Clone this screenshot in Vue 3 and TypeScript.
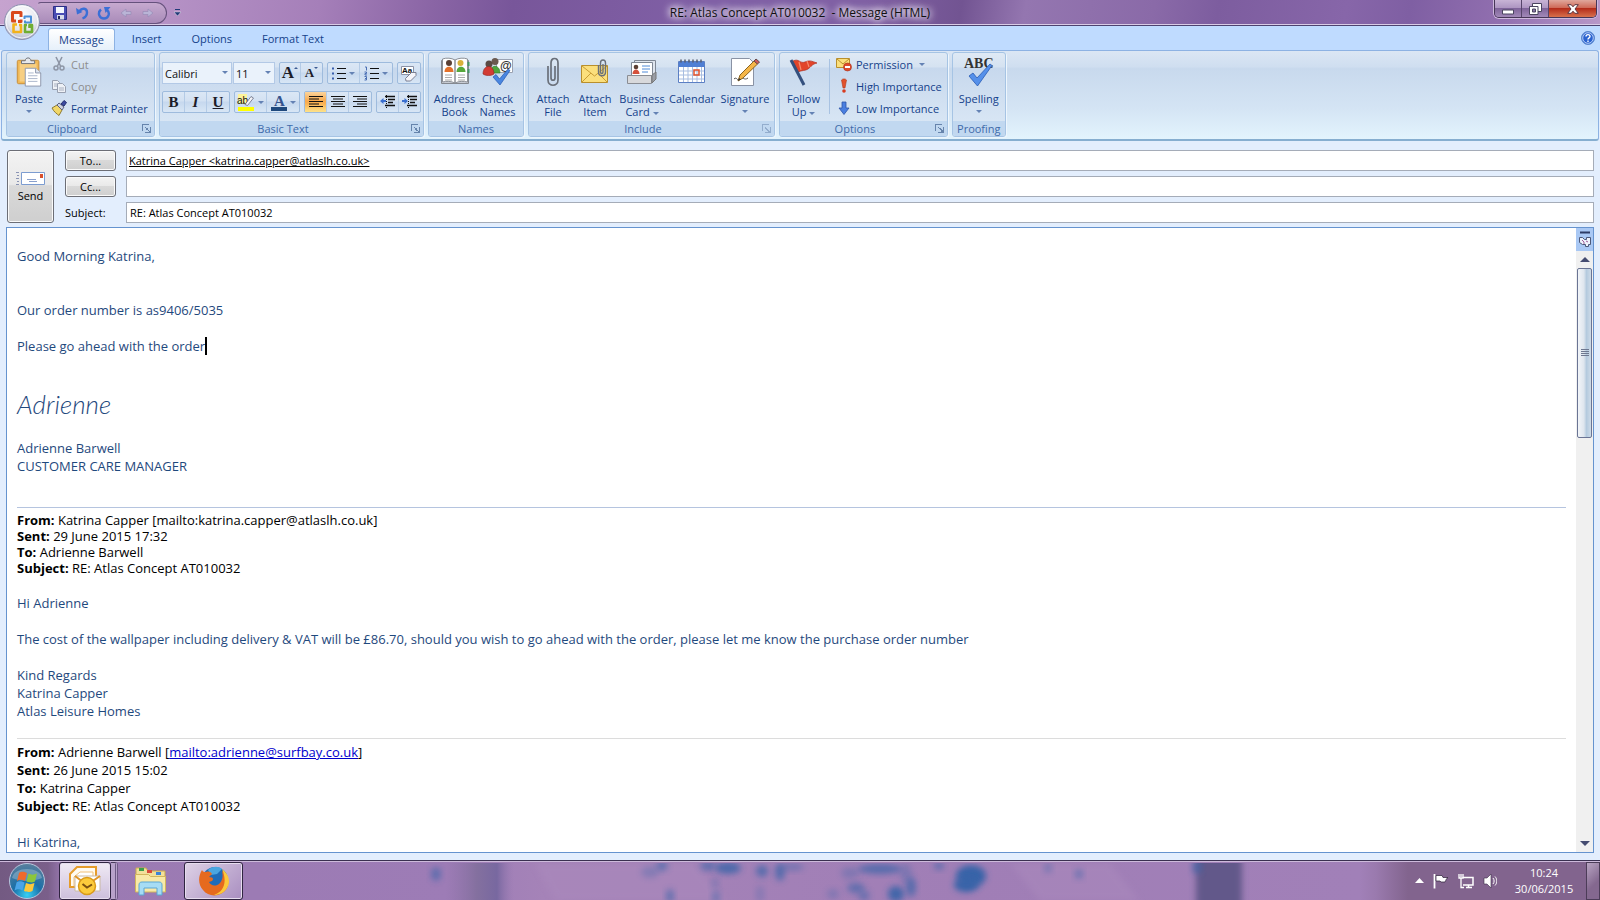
<script setup lang="ts">
import { ref } from 'vue'

const tabs = ['Message', 'Insert', 'Options', 'Format Text']
const activeTab = ref('Message')
const fontName = ref('Calibri')
const fontSize = ref('11')
const cc = ref('')
const subject = ref('RE: Atlas Concept AT010032')
const thumbShare = 30

interface Spot { x: number; y: number; rx: number; ry: number; o: number }
const spots: Spot[] = [
  { x: 436, y: 11, rx: 5, ry: 7, o: 0.6 },
  { x: 662, y: 3, rx: 6, ry: 5, o: 0.6 },
  { x: 650, y: 9, rx: 9, ry: 6, o: 0.3 },
  { x: 708, y: 3, rx: 8, ry: 5, o: 0.6 },
  { x: 728, y: 5, rx: 13, ry: 6, o: 0.8 },
  { x: 762, y: 8, rx: 6, ry: 6, o: 0.7 },
  { x: 780, y: 9, rx: 5, ry: 9, o: 0.7 },
  { x: 792, y: 4, rx: 12, ry: 4, o: 0.4 },
  { x: 670, y: 33, rx: 4, ry: 7, o: 0.6 },
  { x: 715, y: 20, rx: 4, ry: 5, o: 0.3 },
  { x: 716, y: 34, rx: 4, ry: 7, o: 0.45 },
  { x: 760, y: 31, rx: 4, ry: 9, o: 0.25 },
  { x: 880, y: 6, rx: 22, ry: 5, o: 0.7 },
  { x: 850, y: 10, rx: 9, ry: 6, o: 0.3 },
  { x: 906, y: 10, rx: 6, ry: 10, o: 0.3 },
  { x: 856, y: 25, rx: 9, ry: 5, o: 0.6 },
  { x: 864, y: 33, rx: 6, ry: 5, o: 0.5 },
  { x: 896, y: 31, rx: 8, ry: 8, o: 0.9 },
  { x: 911, y: 24, rx: 5, ry: 10, o: 0.7 },
  { x: 833, y: 31, rx: 6, ry: 5, o: 0.3 },
  { x: 971, y: 13, rx: 15, ry: 11, o: 1 },
  { x: 966, y: 22, rx: 12, ry: 7, o: 1 },
  { x: 939, y: 3, rx: 5, ry: 4, o: 0.6 },
  { x: 1048, y: 5, rx: 4, ry: 5, o: 0.4 },
  { x: 1079, y: 11, rx: 4, ry: 5, o: 0.5 },
  { x: 1197, y: 4, rx: 5, ry: 7, o: 0.6 }
]
</script>

<template>
  <div class="screen">
    <header class="titlebar">
      <div class="quick">
        <button class="q" aria-label="Save">
          <svg width="14" height="14" viewBox="0 0 14 14"><path d="M.5.5h13v13H2L.5 12z" fill="#4a4db4" stroke="#2c2f86" /><path d="M3 1h8v6H3z" fill="#f4f8ff" /><path d="M4 9h7v4.500H4z" fill="#d8dcea" /><path d="M5 10h2v3H5z" fill="#23245e" /></svg>
        </button>
        <button class="q" aria-label="Undo">
          <svg width="14" height="14" viewBox="0 0 14 14"><path d="M4.500 5C7 1.500 12 2 12 6.500c0 3-2 5-4.500 6" fill="none" stroke="#3b6fd6" stroke-width="2.400" /><path d="M1 2l1 6.500L7.500 6z" fill="#3b6fd6" /></svg>
        </button>
        <button class="q" aria-label="Redo">
          <svg width="14" height="14" viewBox="0 0 14 14"><path d="M4 3.500C0 7 2.500 12.500 7 12.500S13.500 7 10 4" fill="none" stroke="#3b6fd6" stroke-width="2.400" /><path d="M7 1h6.500L8.500 7z" fill="#3b6fd6" /></svg>
        </button>
        <button class="q" aria-label="Previous item">
          <svg width="12" height="10" viewBox="0 0 12 10"><path d="M6 1v2.500h5v3H6V9L1 5z" fill="#b9b4d6" stroke="#9488b4" stroke-width=".6" /></svg>
        </button>
        <button class="q" aria-label="Next item">
          <svg width="12" height="10" viewBox="0 0 12 10"><path d="M6 1v2.500H1v3h5V9l5-4z" fill="#b9b4d6" stroke="#9488b4" stroke-width=".6" /></svg>
        </button>
      </div>
      <button class="q more" aria-label="Customize Quick Access Toolbar">
        <svg width="7" height="8" viewBox="0 0 7 8"><path d="M1 .500h5" stroke="#223a78" /><path d="M0 3h7L3.500 7z" fill="#223a78" stroke="#fff" stroke-width=".4" /></svg>
      </button>
      <h1>RE: Atlas Concept AT010032&nbsp; - Message (HTML)</h1>
      <div class="winbtns">
        <button class="min" aria-label="Minimize"><svg width="12" height="6" viewBox="0 0 12 6"><path d="M.5 1h11v4H.5z" fill="#fff" stroke="#4b4560" /></svg></button>
        <button class="max" aria-label="Restore"><svg width="13" height="12" viewBox="0 0 13 12"><path d="M3.500.5h9v8h-9z" fill="#fff" stroke="#4b4560" /><path d="M.5 3.500h8.500v8H.5z" fill="#fff" stroke="#4b4560" /><path d="M3.500 6h3v3h-3z" fill="#8a78a8" stroke="#4b4560" /></svg></button>
        <button class="close" aria-label="Close"><svg width="12" height="10" viewBox="0 0 12 10"><path d="M.7.7h3.500L6 2.800 7.800.7h3.500L8 5l3.300 4.300H7.800L6 7.200 4.200 9.300H.7L4 5z" fill="#fff" stroke="#5b3540" /></svg></button>
      </div>
    </header>

    <button class="orb" aria-label="Office Button">
      <svg width="38" height="38" viewBox="0 0 38 38">
        <defs><radialGradient id="ob" cx=".5" cy=".3" r=".75"><stop offset="0" stop-color="#fff" /><stop offset=".6" stop-color="#e4e6ee" /><stop offset="1" stop-color="#a9adc4" /></radialGradient></defs>
        <circle cx="19" cy="19" r="17.500" fill="url(#ob)" stroke="#8c8fae" />
        <circle cx="19" cy="19" r="16" fill="none" stroke="#fff" stroke-opacity=".8" />
        <g fill="none">
          <path d="M13 18H9.500V9.500H18V14M18 16.500v2h-3" stroke="#d9481c" stroke-width="3" stroke-linejoin="round" />
          <path d="M21.500 16v-2.500h6.500v6h-6v-2" stroke="#4a8fd8" stroke-width="2" stroke-linejoin="round" />
          <path d="M14 21.500h-3.500v7.500H18v-7h-2" stroke="#f2b21c" stroke-width="2.600" stroke-linejoin="round" />
          <path d="M24 22h-2v7h7v-7h-2.500v3" stroke="#6fae33" stroke-width="2.600" stroke-linejoin="round" />
        </g>
      </svg>
    </button>

    <nav class="tabs">
      <button v-for="t in tabs" :key="t" class="tab" :class="{ on: t === activeTab }" @click="activeTab = t">{{ t }}</button>
      <button class="help" aria-label="Help"><svg width="14" height="14" viewBox="0 0 14 14"><circle cx="7" cy="7" r="6.500" fill="#2a62d0" stroke="#5c88cc" /><circle cx="7" cy="7" r="5.300" fill="none" stroke="#dceaff" stroke-width=".8" /><path d="M5 5.500c0-2.500 4-2.500 4 0C9 7 7 6.800 7 8.500M7 9.500v1.500" fill="none" stroke="#fff" stroke-width="1.400" /></svg></button>
    </nav>

    <section class="ribbon">
      <div class="group">
        <div class="body clip">
          <button class="big paste">
            <svg width="28" height="32" viewBox="0 0 28 32"><rect x="1.500" y="3.500" width="23" height="25" rx="1.500" fill="#f0b856" stroke="#c98c34" /><path d="M4 7h18v19H4z" fill="#f7cf83" /><path d="M6 7V4h4c0-4 6-4 6 0h4v3z" fill="#e6e8ec" stroke="#6c6f78" /><path d="M10 12h11l5.500 5v14H10z" fill="#fff" stroke="#8c95ac" /><path d="M21 12v5h5.500" fill="#dfe6f2" stroke="#8c95ac" /><path d="M13 17h6M13 20h10M13 23h10M13 26h10" stroke="#a9b4ca" /></svg>
            <span>Paste</span><i class="arr"></i>
          </button>
          <div class="smalls">
            <button class="small off"><svg width="16" height="16" viewBox="0 0 16 16"><path d="M5 1l4.500 9M11 1L6.500 10" stroke="#8e96a6" stroke-width="1.600" /><circle cx="5" cy="12" r="2" fill="none" stroke="#8e96a6" stroke-width="1.500" /><circle cx="11" cy="12" r="2" fill="none" stroke="#8e96a6" stroke-width="1.500" /></svg>Cut</button>
            <button class="small off"><svg width="16" height="16" viewBox="0 0 16 16"><path d="M1.500 2.500h5l2 2v7h-7z" fill="#eef1f6" stroke="#98a0b0" /><path d="M6.500 5.500h5l3 3v6h-8z" fill="#eef1f6" stroke="#98a0b0" /><path d="M3 6h3M3 8h3M8 10h5M8 12h5" stroke="#a8b0c0" /></svg>Copy</button>
            <button class="small"><svg width="16" height="16" viewBox="0 0 16 16"><path d="M1 8l5-3 5 5-3 5.500C6 14 3 12 1 8z" fill="#f1d768" stroke="#8d7a34" /><path d="M6 5l2-2 5 4-2 3z" fill="#cfd3e0" stroke="#5c6180" /><path d="M10 4l3-3.500 2.500 2L13 6z" fill="#3c4aa0" stroke="#252f70" /></svg>Format Painter</button>
          </div>
        </div>
        <div class="cap more-opts">Clipboard<i class="launch"></i></div>
      </div>

      <div class="group">
        <div class="body basic">
          <div class="row">
            <div class="combos">
              <span class="combo name"><select v-model="fontName" aria-label="Font"><option>Calibri</option><option>Tahoma</option></select><i class="arr"></i></span>
              <span class="combo size"><select v-model="fontSize" aria-label="Font size"><option>11</option><option>12</option></select><i class="arr"></i></span>
            </div>
            <div class="set">
              <button class="t w21" aria-label="Grow Font"><b class="ser g">A</b><i class="tri up"></i></button>
              <button class="t w21" aria-label="Shrink Font"><b class="ser s">A</b><i class="tri"></i></button>
            </div>
            <div class="set">
              <button class="t w32" aria-label="Bullets"><svg width="14" height="14" viewBox="0 0 14 14"><path d="M5 2.500h9M5 7.500h9M5 12.500h9" stroke="#111" /><path d="M0 1.500h2v2H0zM0 6.500h2v2H0zM0 11.500h2v2H0z" fill="#3a5fae" /></svg><i class="arr"></i></button>
              <button class="t w32" aria-label="Numbering"><svg width="15" height="15" viewBox="0 0 15 15"><path d="M6 2.500h9M6 7.500h9M6 12.500h9" stroke="#111" /><path d="M1 1h1.500v3.500M.5 6h2v1.500H1V9h2M.5 10.500h2v3.500h-2M1 12.500h1.500" fill="none" stroke="#4a6fb4" /></svg><i class="arr"></i></button>
            </div>
            <div class="set">
              <button class="t w22" aria-label="Clear Formatting"><svg width="18" height="18" viewBox="0 0 18 18"><path d="M1.500 2.500h12v8h-12z" fill="#fff" stroke="#8c93a6" /><text x="2" y="9" font-size="8" font-weight="bold" font-family="Liberation Sans, sans-serif" fill="#111">Aa</text><path d="M5.500 14.500l6-6H16v3l-5.500 5.500H6z" fill="#f5f5fa" stroke="#7a7f92" /></svg></button>
            </div>
          </div>
          <div class="row">
            <div class="set">
              <button class="t w22"><b class="ser">B</b></button>
              <button class="t w22"><b class="ser it">I</b></button>
              <button class="t w22"><b class="ser un">U</b></button>
            </div>
            <div class="set">
              <button class="t w32" aria-label="Highlight"><svg width="18" height="18" viewBox="0 0 18 18"><path d="M1 1h9v10H1z" fill="#fdf39a" /><text x="0" y="11" font-size="10" font-family="Liberation Sans, sans-serif" fill="#111">ab</text><path d="M8 11.500l6-8 2.500 1.500-6 7.500z" fill="#f4f4f8" stroke="#666c80" stroke-width=".8" /><path d="M1 14h16v4H1z" fill="#ff0" /></svg><i class="arr"></i></button>
              <button class="t w32" aria-label="Font Color"><svg width="16" height="18" viewBox="0 0 16 18"><text x="3" y="13" font-size="15" font-weight="bold" font-family="Liberation Serif, serif" fill="#35548e">A</text><path d="M0 14h16v4H0z" fill="#1f497d" /></svg><i class="arr"></i></button>
            </div>
            <div class="set">
              <button class="t w22 hot" aria-label="Align Left"><svg width="14" height="12" viewBox="0 0 14 12"><path d="M0 .5h14M0 3h10M0 5.500h14M0 8h10M0 10.500h14" stroke="#111" /></svg></button>
              <button class="t w22" aria-label="Center"><svg width="14" height="12" viewBox="0 0 14 12"><path d="M0 .5h14M2 3h10M0 5.500h14M2 8h10M0 10.500h14" stroke="#111" /></svg></button>
              <button class="t w22" aria-label="Align Right"><svg width="14" height="12" viewBox="0 0 14 12"><path d="M0 .5h14M4 3h10M0 5.500h14M4 8h10M0 10.500h14" stroke="#111" /></svg></button>
            </div>
            <div class="set">
              <button class="t w22" aria-label="Decrease Indent"><svg width="16" height="14" viewBox="0 0 16 14"><path d="M5 1.500h10M8 4.500h7M8 7.500h5M5 10.500h10" stroke="#111" stroke-width="1.500" /><path d="M6.500 0v14" stroke="#111" stroke-dasharray="1 1" /><path d="M0 6l3.500-3v2H6v2H3.500v2z" fill="#3a6fd0" /></svg></button>
              <button class="t w21" aria-label="Increase Indent"><svg width="16" height="14" viewBox="0 0 16 14"><path d="M5 1.500h10M8 4.500h7M8 7.500h5M5 10.500h10" stroke="#111" stroke-width="1.500" /><path d="M6.500 0v14" stroke="#111" stroke-dasharray="1 1" /><path d="M6 6L2.500 3v2H0v2h2.500v2z" fill="#3a6fd0" /></svg></button>
            </div>
          </div>
        </div>
        <div class="cap more-opts">Basic Text<i class="launch"></i></div>
      </div>

      <div class="group">
        <div class="body names">
          <button class="big w43">
            <svg width="30" height="30" viewBox="0 0 30 30"><path d="M1.500 3.500h27v23h-27z" fill="#c8ccd4" stroke="#84888f" /><path d="M2.500 2c4-1.500 9-1 12.500 1v23c-4-2-8.500-2-12.500-1zM27.500 2c-4-1.500-9-1-12.500 1v23c4-2 8.500-2 12.500-1z" fill="#fff" stroke="#8c9097" /><path d="M5 18h7M5 20.500h7M5 23h7M18 18h7M18 20.500h7M18 23h7" stroke="#aaa" /><circle cx="9" cy="6" r="3" fill="#5b4035" /><path d="M4.500 15c0-7 9-7 9 0z" fill="#e4712a" /><circle cx="20.500" cy="6" r="3" fill="#d9b13a" /><path d="M16.500 15c0-7 9-7 9 0z" fill="#57a83c" /><path d="M28.500 5v4M28.500 12v4" stroke="#496" stroke-width="2" /></svg>
            <span>Address</span><span>Book</span>
          </button>
          <button class="big w43">
            <svg width="32" height="30" viewBox="0 0 32 30"><path d="M14.500 2.500h16v13h-16z" fill="#fff" stroke="#9aa2b2" /><text x="18" y="13" font-size="12" font-weight="bold" font-family="Liberation Sans, sans-serif" fill="#333">@</text><circle cx="13" cy="4.500" r="3.500" fill="#6b5a50" /><path d="M8 16c0-9 10-9 10 0z" fill="#4ea63e" stroke="#2f7a28" stroke-width=".6" /><circle cx="7" cy="7" r="3.500" fill="#5b4a44" /><path d="M1 17c0-10 11-10 11 0-3 2-8 2-11 0z" fill="#d23b34" stroke="#8e2522" stroke-width=".6" /><path d="M11 20l3-2.500 3.500 4.500L26 12l2 1.500L18 28z" fill="#4a86e0" stroke="#2559b0" stroke-width=".7" /></svg>
            <span>Check</span><span>Names</span>
          </button>
        </div>
        <div class="cap">Names</div>
      </div>

      <div class="group">
        <div class="body include">
          <button class="big w42">
            <svg width="14" height="30" viewBox="0 0 14 30"><path d="M9 9v12c0 3-4 3-4 0V6c0-6 7-6 7 0v17c0 7-10 7-10 0V9" fill="none" stroke="#6a707a" stroke-width="1.700" /></svg>
            <span>Attach</span><span>File</span>
          </button>
          <button class="big w42">
            <svg width="30" height="30" viewBox="0 0 30 30"><path d="M1.500 8.500h26v17h-26z" fill="#fbdf7c" stroke="#b98f2c" /><path d="M2 9l12.500 10L27 9M2 25l9-9M27 25l-9-9" fill="none" stroke="#c99c34" /><path d="M23 7v8c0 2-2.500 2-2.500 0V6c0-4 5-4 5 0v9c0 5-7 5-7 0V8" fill="none" stroke="#6a707a" stroke-width="1.400" /></svg>
            <span>Attach</span><span>Item</span>
          </button>
          <button class="big w52">
            <svg width="32" height="30" viewBox="0 0 32 30"><path d="M8.500 3.500h21v14h-21z" fill="#dfe5ee" stroke="#7e8794" /><path d="M5.500 5.500h21v14h-21z" fill="#fff" stroke="#7e8794" /><path d="M16 9h8M16 12h8M16 15h6" stroke="#4f8ad8" /><circle cx="10" cy="10" r="2.300" fill="#5b4035" /><path d="M6.500 17c0-6 7-6 7 0z" fill="#d4503a" /><path d="M1.500 18.500h24v8h-24z" fill="#d8d9dc" stroke="#8a8d94" /><path d="M26 18l4-3v7l-4 4z" fill="#9a9da5" stroke="#777" /></svg>
            <span>Business</span><span>Card <i class="arr"></i></span>
          </button>
          <button class="big w48">
            <svg width="30" height="30" viewBox="0 0 30 30"><path d="M1.500 4.500h26v21h-26z" fill="#fff" stroke="#5b7fc4" /><path d="M2 5h25v5H2z" fill="#4f7fd4" /><path d="M2 14h25M2 18h25M2 22h25M6.500 10v15M11 10v15M15.500 10v15M20 10v15M24.500 10v15" stroke="#a8bde0" /><path d="M4 2.500v3M8 2.500v3M12 2.500v3M16 2.500v3M20 2.500v3M24 2.500v3" stroke="#555c70" stroke-width="1.500" /><path d="M17 13h5v5h-5z" fill="none" stroke="#e2542c" stroke-width="1.500" /></svg>
            <span>Calendar</span>
          </button>
          <button class="big w58">
            <svg width="32" height="30" viewBox="0 0 32 30"><path d="M2.500 1.500h18l4 4v23h-22z" fill="#fff" stroke="#8992a4" /><path d="M5 22c3-3 3 3 6 0s4 2 8-1" fill="none" stroke="#555" /><path d="M9 24l2-6L25 4l3.500 3L14 21z" fill="#f5b648" stroke="#8a6420" /><path d="M25 4l2-2 3.500 3-2 2z" fill="#d05a5a" stroke="#6a4a4a" /><path d="M9 24l1-3 2 1.500z" fill="#333" /></svg>
            <span>Signature</span><i class="arr"></i>
          </button>
        </div>
        <div class="cap more-opts">Include<i class="launch dim"></i></div>
      </div>

      <div class="group">
        <div class="body opts">
          <button class="big w43">
            <svg width="30" height="30" viewBox="0 0 30 30"><path d="M4 4c6-3 7 3 12 1s6-1 12 1c-5 1-6 4-9 6s-6 1-10 3z" fill="#e2452a" stroke="#b02c1c" stroke-width=".7" /><path d="M10 5l2 8M18 4l2 6" stroke="#f58a6c" stroke-width="1.200" /><path d="M2 3l13 25" stroke="#34507e" stroke-width="3" /></svg>
            <span>Follow</span><span>Up <i class="arr"></i></span>
          </button>
          <div class="smalls split">
            <button class="small"><svg width="16" height="16" viewBox="0 0 16 16"><path d="M.5 2.500h13v9H.5z" fill="#fbdf7c" stroke="#b98f2c" /><path d="M1 3l6 5 6-5" fill="none" stroke="#b98f2c" /><circle cx="11.500" cy="11" r="4" fill="#de4b2c" stroke="#a8321c" stroke-width=".6" /><path d="M9 11h5" stroke="#fff" stroke-width="1.800" /></svg>Permission <i class="arr"></i></button>
            <button class="small"><svg width="16" height="16" viewBox="0 0 16 16"><path d="M5.500 2c1-1.500 4-1.500 5 0L9 10H7z" fill="#e2512c" stroke="#b03a1c" stroke-width=".6" /><circle cx="8" cy="13" r="1.800" fill="#d83c20" /></svg>High Importance</button>
            <button class="small"><svg width="16" height="16" viewBox="0 0 16 16"><path d="M6 2h4v6h3l-5 6.500L3 8h3z" fill="#4a7fe0" stroke="#2d55a8" stroke-width=".8" /></svg>Low Importance</button>
          </div>
        </div>
        <div class="cap more-opts">Options<i class="launch"></i></div>
      </div>

      <div class="group">
        <div class="body">
          <button class="big w52">
            <svg width="32" height="30" viewBox="0 0 32 30"><text x="1" y="11" font-size="14" font-weight="bold" font-family="Liberation Serif, serif" fill="#333">ABC</text><path d="M6 19l4-3 4 5L27 7l2 1.500L14.500 29z" fill="#5590ea" stroke="#2a5cb4" stroke-width=".8" /></svg>
            <span>Spelling</span><i class="arr"></i>
          </button>
        </div>
        <div class="cap">Proofing</div>
      </div>
    </section>

    <main class="compose">
      <form class="head" @submit.prevent>
        <button class="send">
          <svg width="30" height="16" viewBox="0 0 30 16"><path d="M5.500 1.500h23v12h-23z" fill="#fff" stroke="#7c9cd0" /><path d="M24 3h3v4h-3z" fill="#d8502c" /><path d="M11 8.500h9M13 10.500h8" stroke="#8aa0cc" /><path d="M0 1.500h3M1 4.500h2M0 7.500h3M1 10.500h2M0 13.500h3" stroke="#8a94b4" /></svg>
          Send
        </button>
        <button class="pick">To...</button>
        <div class="field to" tabindex="0"><a href="mailto:katrina.capper@atlaslh.co.uk">Katrina Capper &lt;katrina.capper@atlaslh.co.uk&gt;</a></div>
        <button class="pick">Cc...</button>
        <input v-model="cc" class="field" aria-label="Cc" />
        <label for="subject">Subject:</label>
        <input id="subject" v-model="subject" class="field" />
      </form>

      <div class="editor">
        <article class="doc" role="textbox" aria-label="Message body" aria-multiline="true" tabindex="0">
          <p>Good Morning Katrina,</p>
          <p class="gap2">Our order number is as9406/5035</p>
          <p class="gap1">Please go ahead with the order<span class="caret"></span></p>
          <p class="sign">Adrienne</p>
          <p>Adrienne Barwell</p>
          <p>CUSTOMER CARE MANAGER</p>
          <div class="quote tah">
            <p><b>From:</b> Katrina Capper [mailto:katrina.capper@atlaslh.co.uk]</p>
            <p><b>Sent:</b> 29 June 2015 17:32</p>
            <p><b>To:</b> Adrienne Barwell</p>
            <p><b>Subject:</b> RE: Atlas Concept AT010032</p>
          </div>
          <p class="gap1">Hi Adrienne</p>
          <p class="gap1">The cost of the wallpaper including delivery &amp; VAT will be £86.70, should you wish to go ahead with the order, please let me know the purchase order number</p>
          <p class="gap1">Kind Regards</p>
          <p>Katrina Capper</p>
          <p>Atlas Leisure Homes</p>
          <div class="quote cal">
            <p><b>From:</b> Adrienne Barwell [<a href="mailto:adrienne@surfbay.co.uk">mailto:adrienne@surfbay.co.uk</a>]</p>
            <p><b>Sent:</b> 26 June 2015 15:02</p>
            <p><b>To:</b> Katrina Capper</p>
            <p><b>Subject:</b> RE: Atlas Concept AT010032</p>
          </div>
          <p class="gap1">Hi Katrina,</p>
        </article>
        <div class="scroll">
          <button class="ruler" aria-label="Show ruler"><svg width="14" height="18" viewBox="0 0 14 18"><path d="M2 1.500h10" stroke="#2d3c66" stroke-width="2" /><path d="M1.500 6.500h3l2 2h2v-2h4v7h-2v2h-3v-2h-3l-3-2z" fill="#eef2fb" stroke="#4c5878" /><path d="M4 9l2 2M8 10l2 1M5 12h2" stroke="#a05a98" /></svg></button>
          <button class="step" aria-label="Scroll up"><svg width="10" height="5" viewBox="0 0 10 5"><path d="M0 5l5-5 5 5z" fill="#444b70" /></svg></button>
          <div class="track"><div class="thumb" :style="{ height: thumbShare + '%' }"><i></i></div></div>
          <button class="step" aria-label="Scroll down"><svg width="10" height="5" viewBox="0 0 10 5"><path d="M0 0l5 5 5-5z" fill="#444b70" /></svg></button>
        </div>
      </div>
    </main>

    <footer class="taskbar">
      <svg class="wall" width="1600" height="38" viewBox="0 0 1600 38" aria-hidden="true">
        <defs>
          <filter id="soft" x="-50%" y="-50%" width="200%" height="200%"><feGaussianBlur stdDeviation="3" /></filter>
          <linearGradient id="s1"><stop offset="0" stop-color="#8a70a6" stop-opacity="0" /><stop offset=".45" stop-color="#84709f" /><stop offset=".75" stop-color="#7868a0" /><stop offset="1" stop-color="#9478b0" stop-opacity="0" /></linearGradient>
        </defs>
        <path d="M446 0h68v38h-68z" fill="url(#s1)" />
        <path d="M535 0h160l30 38H555zM1010 0h100l30 38h-100z" fill="#ab8abd" opacity=".5" filter="url(#soft)" />
        <path d="M1196 -10h46v58h-46z" fill="#62588a" filter="url(#soft)" />
        <ellipse v-for="(s, i) in spots" :key="i" :cx="s.x" :cy="s.y" :rx="s.rx" :ry="s.ry" :opacity="s.o" fill="#3764a8" filter="url(#soft)" />
      </svg>
      <button class="start" aria-label="Start">
        <svg width="38" height="38" viewBox="0 0 38 38">
          <defs><radialGradient id="sg" cx=".5" cy=".9" r=".9"><stop offset="0" stop-color="#38d0f4" /><stop offset=".45" stop-color="#1a6fa8" /><stop offset="1" stop-color="#5a7f9c" /></radialGradient></defs>
          <circle cx="19" cy="19" r="17.500" fill="url(#sg)" stroke="#b8c4dc" />
          <path d="M4 16C6 4 32 4 34 16 25 20 13 20 4 16z" fill="#fff" opacity=".25" />
          <path d="M11 11c3-2 5-1 8 0l-2 8c-3-1.500-5-2-8 0z" fill="#ee6a2c" /><path d="M20.500 11.500c3 1.500 5 1.500 8.500 0l-2 8c-3 1.500-5 1-8.500 0z" fill="#8cc63c" /><path d="M8.500 20.500c3-2 5-1 8 0l-2 8c-3-1.500-5-2-8 0z" fill="#4aa4e8" /><path d="M18 21c3 1.500 5 1.500 8.500 0l-2 8c-3 1.500-5 1-8.500 0z" fill="#fcc83a" />
        </svg>
      </button>
      <button class="app active" aria-label="Outlook">
        <svg width="34" height="32" viewBox="0 0 34 32"><path d="M2 9L9 2h19v20H2z" fill="#fffaf0" stroke="#e59c2c" stroke-width="2" /><path d="M6 12l6-5h13v14H6z" fill="#fff" stroke="#f0c078" /><path d="M7 11h25v15H7z" fill="#fff" stroke="#c9b9a4" /><path d="M7 11l12 9 13-9" fill="none" stroke="#e0962a" stroke-width="2" /><circle cx="19" cy="21" r="8.500" fill="#fccb3c" stroke="#d99a1a" stroke-width="1.500" /><path d="M14.500 19l4.500 3.500 5-3" fill="none" stroke="#7a5010" stroke-width="2" /></svg>
      </button>
      <i class="stack"></i>
      <button class="app plain" aria-label="Windows Explorer">
        <svg width="34" height="32" viewBox="0 0 34 32"><path d="M2 3h10l2 3h17v8H2z" fill="#f3e09a" stroke="#c8aa50" /><path d="M5 3h5v3H5z" fill="#3ca04a" /><path d="M13 5h5v3h-5z" fill="#d84a3a" /><path d="M22 7h5v3h-5z" fill="#3a84d8" /><path d="M1.500 9.500h13l2 2h15V27h-30z" fill="#f8e9a8" stroke="#d2b65c" /><path d="M5 30V20c0-2 1-3 3-3h17c2 0 3 1 3 3v10h-5v-7H10v7z" fill="#a6dcf4" stroke="#5aa6d4" /></svg>
      </button>
      <button class="app firefox" aria-label="Firefox">
        <svg width="32" height="32" viewBox="0 0 32 32"><circle cx="17" cy="15" r="13" fill="#1f6cb8" /><path d="M10 5c4-4 11-4 14-1l-5 5-6 1z" fill="#4aa6e0" /><path d="M4 5c1 2 2 2 4 2 3-1 5 0 6 2l-3 3c4 0 5 2 3 4l-3 1c2 4 7 5 11 1 3-4 3-8 2-12 6 4 8 11 5 17-5 9-18 10-24 2C0 20 0 11 4 5z" fill="#e66a1e" /><path d="M24 4c7 5 9 13 5 19-3 5-8 7-13 7 9-3 14-12 8-26z" fill="#fbc93c" /></svg>
      </button>
      <div class="tray">
        <button aria-label="Show hidden icons"><svg width="9" height="5" viewBox="0 0 9 5"><path d="M0 5l4.500-5L9 5z" fill="#fff" /></svg></button>
        <button aria-label="Action Center"><svg width="16" height="16" viewBox="0 0 16 16"><path d="M1.500 1v14.500" stroke="#fff" stroke-width="1.800" /><path d="M3 2.500h6l1 2h5c-2 1-2 3-3 4.500H8l-1-1H3z" fill="#fff" stroke="#2c2038" stroke-width=".7" /></svg></button>
        <button aria-label="Network"><svg width="16" height="16" viewBox="0 0 16 16"><path d="M5 4.500h10v7.500H5M8 14.500h6M10.500 12v2" fill="none" stroke="#fff" stroke-width="1.500" /><path d="M1 1v4h4V1M3 5v9.500h3M3 1v3" fill="none" stroke="#fff" stroke-width="1.300" /></svg></button>
        <button aria-label="Volume"><svg width="14" height="16" viewBox="0 0 14 16"><path d="M1 5h3l4-4v14l-4-4H1z" fill="#fff" stroke="#3a2c48" stroke-width=".6" /><path d="M10 5c1.500 2 1.500 4 0 6M12 3.500c2.500 3 2.500 6 0 9" fill="none" stroke="#fff" /></svg></button>
      </div>
      <time class="clock"><span>10:24</span><span>30/06/2015</span></time>
      <button class="desk" aria-label="Show desktop"></button>
    </footer>
  </div>
</template>

<style>
html, body { margin: 0; height: 100%; overflow: hidden; }
</style>

<style scoped>
* { box-sizing: border-box; }
button { font: inherit; color: inherit; border: 0; background: none; padding: 0; margin: 0; display: flex; align-items: center; justify-content: center; cursor: default; }
svg { display: block; flex: none; }
p, h1 { margin: 0; font-weight: normal; }
i { font-style: normal; }
.screen { position: relative; height: 100vh; display: flex; flex-direction: column; font-family: "Open Sans", "Noto Sans", sans-serif; font-size: 11px; color: #15428b; background: #e3eefd; }

.titlebar { flex: none; height: 26px; display: flex; align-items: center; padding-left: 37px; border-bottom: 1px solid #4d4370; box-shadow: inset 0 -1px 0 #d9cbe6; background: linear-gradient(100deg, #c6a3cf 0, #b996c8 8%, #a57fb9 20%, #8a65a5 27%, #78569a 32%, #8060a6 44%, #8060a4 54%, #725492 60%, #9476b0 64%, #8a6aa8 72%, #7d5d9f 76%, #8766a9 84%, #7f5fa3 88%, #9270b0 94%, #b898c8 100%); }
.quick { height: 22px; width: 130px; display: flex; align-items: center; gap: 8px; padding-left: 15px; border: 1px solid #65517c; border-left-color: transparent; border-radius: 4px 11px 11px 4px; background: linear-gradient(#c6a9cf, #a98bb9); }
.q { width: 14px; height: 16px; }
.more { margin-left: 3px; }
h1 { flex: 1; padding-right: 78px; text-align: center; font-size: 12px; line-height: 25px; color: #111; text-shadow: 0 0 6px #fff, 0 0 8px #fff, 0 0 10px #e8dcf4; }
.winbtns { align-self: flex-start; display: flex; height: 18px; margin-right: 3px; border: 1px solid #463657; border-top: 0; border-radius: 0 0 5px 5px; overflow: hidden; box-shadow: 0 0 0 1px #cdb8dc; }
.winbtns button { width: 27px; background: linear-gradient(#c8b4d6 0, #ae96c2 45%, #7f649a 50%, #a289b8 100%); border-right: 1px solid #56456a; }
.winbtns .close { width: 47px; border: 0; background: linear-gradient(#e0a79c 0, #cf6a58 45%, #b42c1a 50%, #d8714c 100%); }
.min svg { margin-top: 6px; }
.orb { position: absolute; left: 3px; top: 3px; }

.tabs { flex: none; height: 24px; display: flex; align-items: flex-end; padding: 0 5px 0 48px; background: #bfdbff; }
.tab { height: 22px; padding: 0 15px 1px; }
.tab.on { padding: 0 10px 1px; margin-right: 2px; background: linear-gradient(#fff, #e6f0fa); border: 1px solid #8db2e3; border-bottom: 0; border-radius: 3px 3px 0 0; }
.help { margin-left: auto; height: 24px; }

.ribbon { flex: none; display: flex; gap: 4px; padding: 1px 4px 2px; height: 91px; border: 1px solid #8db2e3; border-bottom: 2px solid #86aed0; border-radius: 3px; margin: 0 1px; background: linear-gradient(#dbe6f4 0, #cfdef0 18%, #c8d9ed 20%, #d4e4f4 65%, #e3f4fd 100%); }
.group { display: flex; flex-direction: column; border: 1px solid #a6c4e4; border-radius: 3px; box-shadow: 1px 1px 0 #eef6fd; overflow: hidden; background: linear-gradient(#dfe9f5 0, #d5e2f1 14px, #c7d8ed 15px, #dce9f6 100%); }
.body { flex: 1; min-height: 0; display: flex; }
.cap { flex: none; position: relative; height: 15px; line-height: 15px; text-align: center; background: #c1d8f0; color: #3e6aaa; }
.more-opts { padding-right: 17px; }
.launch { position: absolute; right: 5px; top: 3px; width: 7px; height: 7px; border-left: 1px solid #6684ac; border-top: 1px solid #6684ac; }
.launch::after { content: ""; position: absolute; left: 2px; top: 2px; width: 5px; height: 5px; border-right: 1px solid #6684ac; border-bottom: 1px solid #6684ac; background: linear-gradient(45deg, transparent 40%, #6684ac 40%, #6684ac 60%, transparent 60%); }
.dim { opacity: .5; }
.big { flex-direction: column; justify-content: flex-start; padding-top: 4px; line-height: 13px; white-space: nowrap; }
.big svg { height: 30px; margin-bottom: 5px; }
.arr { display: inline-block; width: 0; height: 0; border: 3px solid transparent; border-top-color: #6482b4; border-bottom: 0; vertical-align: middle; }
.big > .arr { margin-top: 5px; }
.w42 { width: 42px; } .w43 { width: 43px; } .w48 { width: 48px; } .w52 { width: 52px; } .w58 { width: 58px; }
.clip { width: 147px; }
.paste { width: 44px; }
.smalls { display: flex; flex-direction: column; }
.small { flex: none; height: 22px; gap: 4px; justify-content: flex-start; white-space: nowrap; }
.small .arr { margin-left: 2px; }
.off { color: #8d8d8d; }
.names { padding: 0 4px; }
.include { padding-left: 3px; }
.opts { padding: 0 5px 0 2px; }
.split { margin-left: 4px; padding-left: 7px; background: linear-gradient(#a8c2e2, #a8c2e2) no-repeat 0 6px / 1px 55px; }

.basic { flex-direction: column; gap: 7px; padding: 9px 2px 0; }
.row { display: flex; gap: 4px; }
.set { display: flex; height: 22px; border: 1px solid #9ebbdd; border-radius: 2px; background: linear-gradient(#dbe7f5 0, #d3e1f2 45%, #c6d8ee 50%, #d8e6f5 100%); }
.t { gap: 3px; border-right: 1px solid #b4cbe6; }
.t:last-child { border-right: 0; }
.w21 { width: 21px; } .w22 { width: 22px; } .w32 { width: 32px; }
.hot { background: linear-gradient(#fbd49c, #f8a94c 45%, #f9b456 60%, #fde28a); }
.ser { font-family: "Liberation Serif", serif; font-size: 15px; line-height: 20px; color: #1c1c28; }
.g { font-size: 17px; } .s { font-size: 13px; }
.it { font-style: italic; } .un { text-decoration: underline; }
.tri { width: 0; height: 0; border: 2px solid transparent; border-top-color: #3d5c94; border-bottom: 0; align-self: flex-start; margin: 4px 0 0 -3px; }
.up { border-top: 0; border-bottom: 2px solid #3d5c94; }
.combos { display: flex; gap: 1px; }
.combo { position: relative; display: block; height: 22px; }
.combo select { appearance: none; width: 100%; height: 100%; border: 1px solid #b3c9e6; background: #eaf2fb; color: #111; font: inherit; font-size: 11px; padding: 0 2px; border-radius: 0; }
.combo .arr { position: absolute; right: 4px; top: 9px; pointer-events: none; }
.name { width: 70px; } .size { width: 42px; }

.compose { flex: 1; min-height: 0; display: flex; flex-direction: column; padding: 9px 6px 7px; color: #000; }
.head { flex: none; display: grid; grid-template-columns: 48px 51px 1fr; column-gap: 10px; row-gap: 5px; padding: 0 0 4px 1px; }
.send { grid-row: 1 / 4; width: 47px; height: 73px; flex-direction: column; gap: 1px; justify-content: flex-start; padding-top: 20px; }
.send, .pick { border: 1px solid #6c6e76; border-radius: 3px; box-shadow: inset 0 0 0 1px #fafafa; background: linear-gradient(#f3f3f3 0, #e9e9e9 47%, #d9d9d9 49%, #cfcfcf 100%); }
.pick { height: 21px; }
.head label { align-self: center; }
.field { height: 21px; width: 100%; border: 1px solid #a5acb8; background: #fff; font: inherit; line-height: 19px; padding: 0 3px; border-radius: 0; }
.to { padding: 0 2px; }
.to a { color: #000; }

.editor { flex: 1; min-height: 0; display: flex; border: 1px solid #6593cf; background: #fff; }
.doc { flex: 1; min-width: 0; overflow: hidden; padding: 19px 10px 0; font-family: "Open Sans", "Noto Sans", sans-serif; font-size: 13px; line-height: 18px; color: #1f497d; }
.gap1 { margin-top: 18px; }
.gap2 { margin-top: 36px; }
.caret { display: inline-block; width: 2px; height: 18px; margin-bottom: -4px; background: #000; }
.sign { margin: 31px 0 17px; font-family: Lato, sans-serif; font-size: 26px; line-height: 36px; font-style: italic; font-weight: 300; }
.quote { color: #000; padding-top: 4px; }
.tah { margin-top: 32px; border-top: 1px solid #b5c4df; line-height: 16px; }
.cal { margin-top: 18px; border-top: 1px solid #dcdcdc; }
.cal a { color: #00c; }

.scroll { width: 17px; display: flex; flex-direction: column; background: #f0f0f0; }
.ruler { height: 23px; background: #a9c8f4; }
.step { height: 17px; }
.track { flex: 1; padding: 0 1px; }
.thumb { display: flex; align-items: center; justify-content: center; border: 1px solid #6a7494; border-radius: 2px; background: linear-gradient(90deg, #f2f5f9 0, #dfe6ee 45%, #b4cade 65%, #cddbe8 100%); }
.thumb i { width: 8px; height: 8px; background: repeating-linear-gradient(#6d7890 0, #6d7890 1px, transparent 1px, transparent 2px); }

.taskbar { flex: none; position: relative; height: 40px; display: flex; align-items: center; overflow: hidden; color: #fff; border-top: 1px solid #3a3050; box-shadow: inset 0 1px 0 #cdbadb; background: linear-gradient(90deg, #735a82 0, #7a5f8a 3%, #9b7ab2 4%, #9d7cb6 28%, #a583b8 34%, #a07eb6 60%, #a180b8 85%, #9a7aae 86%, #82648e 88%, #82648e 100%); }
.wall { position: absolute; left: 0; top: 2px; }
.taskbar button, .tray, .clock { position: relative; }
.start { margin-left: 8px; }
.app { height: 38px; border: 1px solid #2f2440; border-radius: 3px; box-shadow: inset 0 0 0 1px #e6dcee; background: linear-gradient(135deg, #ded2e6, #a98ec0); }
.active { margin-left: 13px; width: 52px; background: linear-gradient(#f0eaf4, #cdbfdc); }
.stack { position: relative; width: 7px; height: 38px; border: 1px solid #4a3c5c; border-left: 0; border-right: 3px double #6f5a86; border-radius: 0 3px 3px 0; background: #b8a2ca; }
.taskbar .plain { width: 66px; border: 0; background: none; box-shadow: none; }
.firefox { width: 59px; }
.tray { margin-left: auto; display: flex; gap: 9px; }
.tray button { height: 16px; }
.clock { width: 84px; margin-left: 5px; display: flex; flex-direction: column; align-items: center; font-size: 11px; line-height: 16px; }
.desk { width: 14px; height: 38px; border: 1px solid #4c3c58; background: linear-gradient(135deg, #b8a4c2, #84688f 60%); }
</style>
